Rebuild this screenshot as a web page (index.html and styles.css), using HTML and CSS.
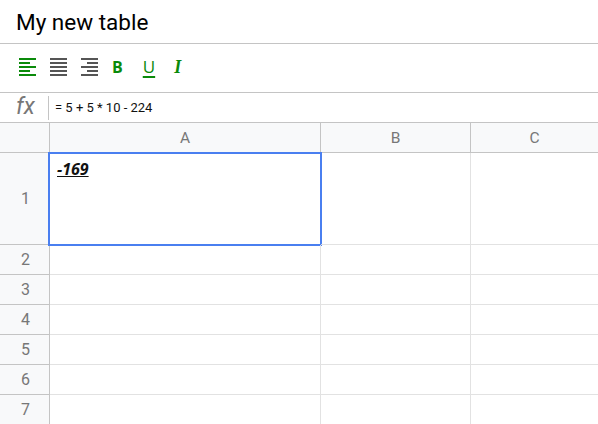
FILE: index.html
```html
<!DOCTYPE html>
<html>
<head>
<meta charset="utf-8">
<link rel="stylesheet" href="styles.css">
</head>
<body>
<div class="title">My new table</div>
<div class="toolbar">
  <svg class="ico" width="18" height="18" viewBox="0 0 18 18">
    <g fill="#0a8a0a">
      <rect x="0" y="0" width="17" height="2"/>
      <rect x="0" y="4" width="11" height="2"/>
      <rect x="0" y="8" width="17" height="2"/>
      <rect x="0" y="12" width="11" height="2"/>
      <rect x="0" y="16" width="17" height="2"/>
    </g>
  </svg>
  <svg class="ico" width="18" height="18" viewBox="0 0 18 18">
    <g fill="#555">
      <rect x="0" y="0" width="17" height="2"/>
      <rect x="0" y="4" width="17" height="2"/>
      <rect x="0" y="8" width="17" height="2"/>
      <rect x="0" y="12" width="17" height="2"/>
      <rect x="0" y="16" width="17" height="2"/>
    </g>
  </svg>
  <svg class="ico" width="18" height="18" viewBox="0 0 18 18">
    <g fill="#555">
      <rect x="0" y="0" width="17" height="2"/>
      <rect x="6" y="4" width="11" height="2"/>
      <rect x="0" y="8" width="17" height="2"/>
      <rect x="6" y="12" width="11" height="2"/>
      <rect x="0" y="16" width="17" height="2"/>
    </g>
  </svg>
  <span class="tb tb-b">B</span>
  <span class="tb tb-u">U</span>
  <span class="tb tb-i">I</span>
</div>
<div class="formula">
  <div class="fx">fx</div>
  <div class="ftext">= 5 + 5 * 10 - 224</div>
</div>
<div class="grid">
  <div class="corner"></div>
  <div class="colh">A</div>
  <div class="colh">B</div>
  <div class="colh last">C</div>

  <div class="rowh tall">1</div>
  <div class="cell tall sel"><span class="val">-169</span></div>
  <div class="cell tall"></div>
  <div class="cell tall last"></div>

  <div class="rowh">2</div><div class="cell"></div><div class="cell"></div><div class="cell last"></div>
  <div class="rowh">3</div><div class="cell"></div><div class="cell"></div><div class="cell last"></div>
  <div class="rowh">4</div><div class="cell"></div><div class="cell"></div><div class="cell last"></div>
  <div class="rowh">5</div><div class="cell"></div><div class="cell"></div><div class="cell last"></div>
  <div class="rowh">6</div><div class="cell"></div><div class="cell"></div><div class="cell last"></div>
  <div class="rowh">7</div><div class="cell"></div><div class="cell"></div><div class="cell last"></div>
</div>
</body>
</html>
```
FILE: styles.css
```css
html, body {
  margin: 0;
  padding: 0;
  background: #fff;
  overflow: hidden;
}
body {
  font-family: Roboto, "Liberation Sans", sans-serif;
  color: #000;
  width: 598px;
  height: 424px;
}
.title {
  height: 44px;
  box-sizing: border-box;
  padding: 8px 0 0 16px;
  font-size: 22.5px;
  line-height: 28px;
  border-bottom: 1px solid #c4c4c4;
}
.toolbar {
  height: 49px;
  box-sizing: border-box;
  border-bottom: 1px solid #c4c4c4;
  display: flex;
  align-items: flex-start;
  padding: 14px 0 0 19px;
}
.ico {
  display: block;
  margin-right: 13px;
}
.tb {
  display: block;
  color: #0a8a0a;
  font-weight: bold;
  line-height: 18px;
}
.tb-b {
  margin-left: 0;
  margin-right: 20px;
  font-family: "Open Sans", sans-serif;
  font-size: 16px;
}
.tb-u {
  text-decoration: underline;
  text-underline-offset: 3px;
  text-decoration-thickness: 2px;
  margin-right: 19px;
  font-weight: normal;
  font-size: 17px;
  font-family: "Open Sans", sans-serif;
}
.tb-i {
  font-style: italic;
  font-family: "Liberation Serif", serif;
  font-size: 18px;
}
.formula {
  height: 30px;
  box-sizing: border-box;
  border-bottom: 1px solid #c4c4c4;
  display: flex;
  align-items: center;
}
.fx {
  width: 49px;
  box-sizing: border-box;
  padding-left: 16px;
  font-style: italic;
  font-size: 23px;
  color: #777;
  height: 24px;
  line-height: 22px;
  border-right: 1px solid #c4c4c4;
  margin-top: 1px;
}
.ftext {
  padding-left: 6px;
  font-size: 13px;
  color: #111;
}
.grid {
  display: grid;
  grid-template-columns: 50px 271px 150px 1fr;
  grid-template-rows: 30px 92px repeat(6, 30px);
}
.corner, .colh, .rowh {
  background: #f8f9fa;
  border-right: 1px solid #c4c4c4;
  border-bottom: 1px solid #c4c4c4;
  box-sizing: border-box;
}
.colh {
  color: #777;
  font-size: 15.5px;
  display: flex;
  align-items: center;
  justify-content: center;
}
.colh.last {
  border-right: none;
}
.rowh {
  color: #777;
  font-size: 16px;
  display: flex;
  align-items: center;
  justify-content: center;
  padding-left: 2px;
}
.cell {
  box-sizing: border-box;
  border-right: 1px solid #e2e2e2;
  border-bottom: 1px solid #e2e2e2;
  position: relative;
}
.cell.last {
  border-right: none;
}
.sel::after {
  content: "";
  position: absolute;
  left: -2px;
  top: -1px;
  right: -2px;
  bottom: -2px;
  border: 2px solid #4a7ff0;
}
.val {
  position: absolute;
  left: 7px;
  top: 5px;
  font-family: "Open Sans", sans-serif;
  font-weight: bold;
  font-style: italic;
  font-size: 16px;
  text-decoration: underline;
  color: #111;
}
```
